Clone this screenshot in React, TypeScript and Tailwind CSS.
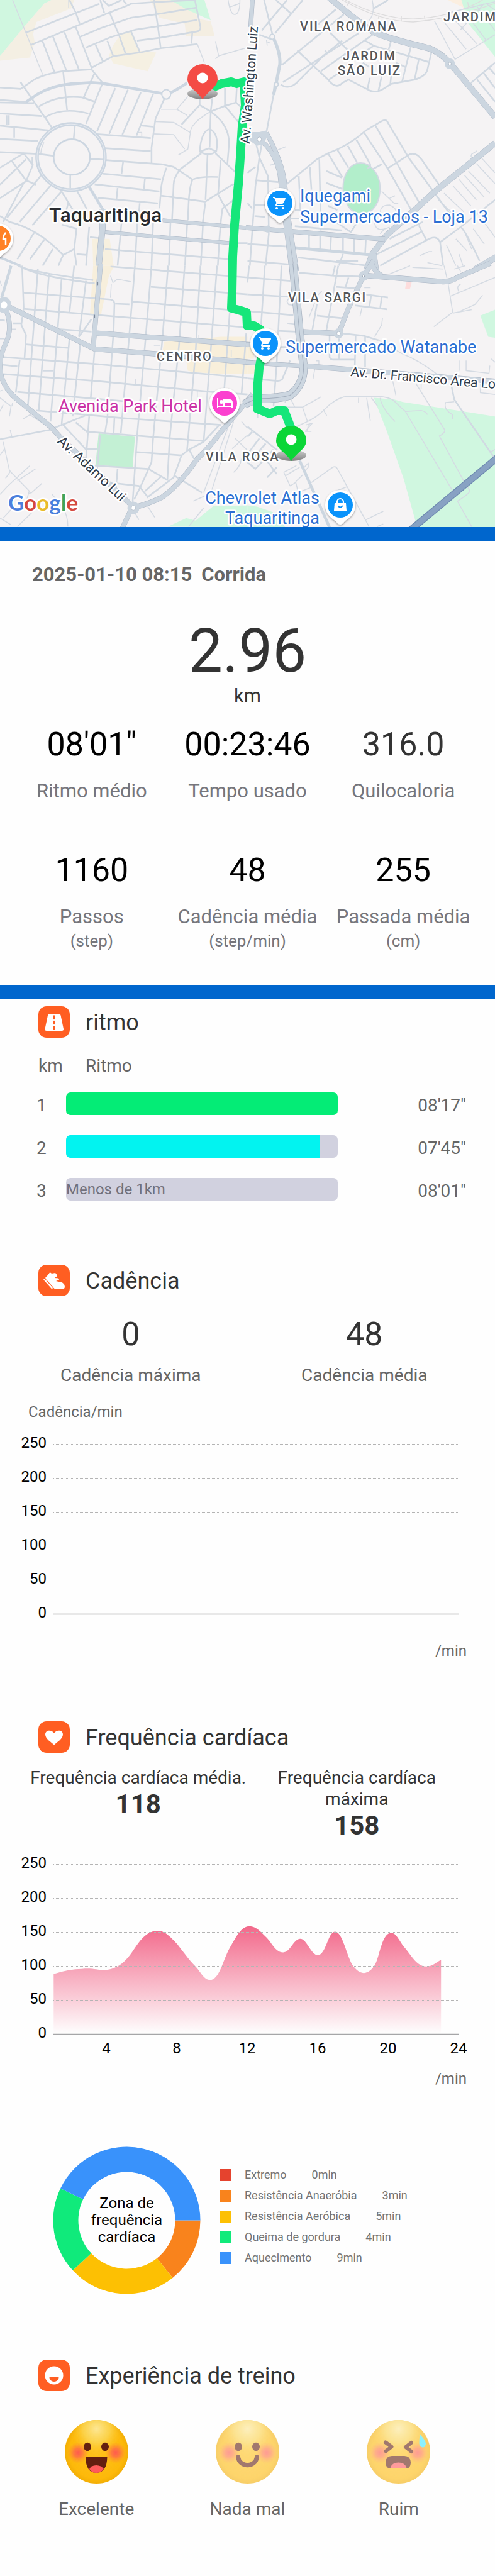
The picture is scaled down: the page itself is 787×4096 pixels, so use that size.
import React from "react";
import { MdShoppingCart } from "react-icons/md";

/* ---------- Map data: street geometry by quadrant ---------- */

const streetsNW = [
  "M165 192L630 22",
  "M195 265L480 155L690 75L800 35L830 22L985 12L1235 0",
  "M440 0L480 75L505 140",
  "M635 0L660 75M650 0L690 35L770 0M780 0L800 25",
  "M695 75L755 210L795 315",
  "M505 218L640 165L830 105L985 85L1245 45",
  "M545 280L700 220L750 205L860 175L1000 155L1250 118",
  "M975 0L1000 155L1018 285",
  "M1235 0L1270 160Q1272 183 1245 186L1018 222L868 240",
  "M1218 195L1213 258",
  "M480 160L580 400L715 332L885 310L1018 285L1250 260",
  "M830 185L885 305M680 240L715 325M605 262L650 360",
  "M268 240L345 425M335 215L420 415M408 190L500 410",
  "M0 517L130 525L220 468Q290 435 400 420L580 410L650 490",
  "M600 430L530 575M400 420L425 650M130 485L330 755",
  "M0 590L165 602M0 605L215 608",
  "M245 630Q360 560 520 575L600 600",
  "M285 692Q400 630 560 670",
  "M650 490L545 730M730 520L615 775M810 530L692 790M892 545L775 795M970 555L865 800",
  "M1040 585L985 700L960 870L960 965",
  "M0 670L265 685M0 742L310 770M0 820L240 832M0 898L235 908",
  "M42 680V738M56 680V738M90 750V812",
  "M475 735L467 820M445 1035V1110M240 908L340 920M570 938L660 942",
  "M615 792L955 815M665 875L955 892",
  "M670 945L1030 970L1100 985L1220 1060",
  "M650 1025L1020 1058M600 1088L1010 1130M620 1168L1000 1200",
  "M780 955L770 1025M918 1055L912 1115M745 1110L738 1175",
  "M885 740L970 748",
  "M1265 585V620L1150 735M1265 620L1335 658L1425 625L1495 605L1560 660",
  "M1425 520V625L1510 720M1500 515L1495 605",
  "M1345 580L1335 658L1328 870",
  "M1335 658Q1460 740 1450 860L1440 975",
  "M1265 895Q1275 770 1330 762Q1390 790 1370 895L1325 875ZQ1320 925 1370 895",
  "M1275 905L1140 1000Q1100 1050 1100 1090L1090 1300",
  "M1365 905L1490 1015M1315 910L1302 1180M1398 945L1382 1140",
  "M1220 1060Q1270 1040 1380 1045M1220 1060Q1200 1100 1195 1200L1190 1300",
  "M1020 1155L1300 1190L1480 1085M1300 1200L1285 1310",
  "M1382 1150L1460 1280M1480 1180L1410 1230Q1395 1300 1380 1568",
  "M1055 990Q1030 1050 1022 1100L1010 1230",
  "M770 1310L745 1568M870 1310L855 1568M970 1310L960 1568M1080 1310L1070 1568M1187 1300L1172 1568M1287 1300L1272 1568",
  "M885 1200L880 1260M665 1470L1450 1530M1510 1435H1568",
  "M325 1090L125 1310M265 1030L45 1285M210 970L165 1070L0 1170M0 990L150 905L205 970V925",
  "M75 950L165 1065L230 1090M150 1080L20 1310M165 940L0 1090",
  "M390 1130L205 1330M390 1130L460 1235M490 1130L550 1235M435 1190L420 1240",
  "M0 1275L60 1310Q240 1350 400 1505L470 1470L485 1350L390 1325",
  "M565 1340L545 1568M470 1470L485 1568M485 1500L550 1505M570 1400L625 1405",
  "M400 1505L370 1568M335 1470L270 1568M280 1415L190 1530M215 1375L110 1530",
];
const thinNW = [
  "M80 0L195 265L270 440M435 48V0M1250 260L1295 370",
  "M1365 243L1385 330L1568 280M1385 330L1365 348",
  "M1445 0Q1460 90 1490 85Q1520 80 1520 0M1455 42L1520 20",
  "M1020 645H1120L1185 680M1120 645L1190 570",
  "M1335 658Q1200 730 1205 790L1190 880L1130 915",
  "M985 718L1100 722L1210 785M970 790L1100 795L1170 880",
  "M875 782H898V805M258 905Q262 870 278 840",
];
const mainNW = [
  "M1030 1300L1568 1345",
  "M665 1370L1460 1435",
];

const streetsNE = [
  "M105 0L160 210M90 180L250 0M175 195L350 0M180 0L275 80M75 205L160 235",
  "M170 500L165 560L120 780",
  "M205 380L225 378L610 85M560 55L400 180",
  "M225 485L705 195M210 500Q260 530 310 490L480 330L600 240M465 420L800 200M515 470L600 420",
  "M315 298L510 470Q560 530 600 490L640 470L775 535Q820 550 860 525L910 495L1060 470Q1130 450 1140 410L1165 310",
  "M520 190L640 300M745 240L800 270L1145 365M800 270L745 305",
  "M910 240L895 290M1035 275L980 480M1085 350L1060 465M775 460L760 525M850 450L830 535M910 450L905 495",
  "M730 370L770 395M940 370L1000 395M490 300L505 312L445 355",
  "M800 50L890 0",
  "M1415 490L1568 370M1455 470L1568 600M1495 430L1568 520M1530 400L1568 440",
  "M245 1090L440 940L510 905Q640 860 750 770L850 715Q880 700 890 725L1020 930L1280 1260",
  "M810 740L1090 1200M740 785L885 990L1050 1260M690 825L775 965Q785 985 760 995M635 860L695 960M570 885L640 990M510 905L600 1045",
  "M455 940L465 1360M395 985L405 1120M325 1040L335 1240H300",
  "M885 995L1030 910Q1070 895 1110 950L1220 1100",
  "M500 1010L600 1050M500 1080L600 1115M790 1000L850 970",
  "M510 1215L570 1240M560 1310L655 1370L690 1320M270 1290H350M300 1335L600 1360",
  "M820 1500L1100 1370M840 1568L1130 1420Q1200 1380 1220 1430L1240 1568",
  "M1220 1430L1350 1340L1568 1180M1350 1340Q1380 1360 1470 1540M1085 1330L1135 1420",
  "M900 1410L1110 1310",
  "M390 1380V1465M460 1385V1470M530 1390L525 1475M605 1400V1480M675 1400V1490M750 1410L745 1500",
  "M320 1520L760 1568M605 1500L580 1568M560 1540H700",
  "M55 850L75 930L130 1040L135 1380L115 1568M90 850L75 930L50 1100L15 1568",
  "M60 1065L195 1075M45 1210L200 1215M45 1275L110 1280M0 1020L50 985M0 1440L240 1455M0 1540L260 1560M0 1200L30 1230",
];
const thinNE = [
  "M790 0Q810 80 770 120",
  "M120 235L125 270M120 245L145 255",
  "M1185 125L1315 350M1245 130L1385 290M1320 125L1455 260M1400 100L1510 235M1455 40L1568 180M1510 20L1568 60",
  "M1315 350L1568 205M1275 75L1568 10M1350 175L1500 20",
  "M190 885L245 865M145 975L165 970",
  "M850 1130L930 1200L955 1200M900 1170L935 1155",
  "M845 1270Q830 1210 900 1210Q950 1230 940 1260M805 1310Q810 1380 900 1340M840 1380L870 1350",
  "M1455 890L1420 910Q1410 930 1430 935",
  "M1300 1095L1415 1215M1340 1060L1450 1180M1375 1035L1500 1165M1400 1010L1535 1140M1450 965L1568 1085M1480 930L1568 1020M1210 1180L1300 1260M1245 1140L1370 1250",
  "M1260 1445L1320 1568M1320 1410L1390 1480M1340 1500L1365 1568M1430 1350L1500 1440M1380 1380L1420 1470M1490 1300L1568 1400",
  "M1140 1550L1230 1568M1090 1510L1150 1485H1170",
];
const railNE = "M600 0Q850 130 1050 130Q1300 110 1568 20M620 0Q850 112 1050 112Q1300 100 1490 0M645 5L630 35M835 80L828 110M975 95V125M1120 92L1125 122M1395 12L1400 40";
const mainNE = [
  "M510 -20Q700 130 800 190Q880 225 1150 285Q1220 310 1280 370L1568 690",
  "M1568 845L1200 1120L880 1390L790 1500L755 1590",
  "M800 1500L815 1600",
  "M1600 1505L1440 1590",
];

const streetsSW = [
  "M115 0Q200 40 590 85M100 -10Q200 60 600 105",
  "M150 160L700 200Q725 205 725 225L720 380",
  "M150 255L1568 365M370 375L580 390M730 225L820 228",
  "M835 212L1568 270M955 125L1568 170M700 5L1568 70",
  "M140 0L150 250L135 350L165 410L155 550",
  "M240 20L175 850M310 50L245 860M390 80L320 920M470 0L440 280M440 430L390 940",
  "M545 90L500 420M510 450L460 890M600 490L575 780",
  "M720 380L680 900L665 990M725 900L720 990",
  "M855 0L820 400L765 990M960 0L925 400L870 990L840 1400",
  "M1065 0L1030 420L970 1020L960 1160Q900 1290 850 1380",
  "M1170 0L1135 460L1075 1020L1060 1270M1270 0L1240 500L1185 1090M1375 0L1340 440L1290 1040",
  "M1455 280L1420 740M1560 400L1530 760",
  "M500 420L580 315M165 465L430 485",
  "M20 540L600 580L1568 662M20 640L600 680L1340 745L1568 760M110 745L780 800M230 855L540 880L780 900L1400 940",
  "M15 585L110 595M270 620H340M125 555L100 750",
  "M0 1025L310 970L540 885M0 320L30 325M0 430H30M80 340H135",
  "M400 940L545 1085L620 1080M480 925L550 980L1290 1035M565 890L545 1140",
  "M865 1100L1150 1120L1190 1090L1290 1040L1390 940M1150 1120L1100 1250L930 1370",
  "M590 1180L940 1200L1060 1265M745 1200L735 1310M690 1280L880 1300L940 1370",
  "M635 1000L615 1210M1200 1090L1230 1140M1020 1245L920 1330",
  "M1105 1240L1280 1340",
];
const thinSW = [
  "M20 1040L60 1210L185 1330L170 1380M0 1120L25 1085M0 780L70 830L60 890M75 830L80 810M0 860L20 820",
  "M35 1255L70 1210M190 1180L50 1300L0 1350M225 1200L110 1270M265 1285L200 1340L180 1345",
  "M0 1490L70 1530M20 1490L70 1440M330 1350L400 1430Q430 1480 430 1540M110 1540L200 1460M65 970L75 1010",
  "M855 1460L880 1500M935 1420L980 1485M0 740L15 735M145 905L190 880L270 930M75 375H100M0 90L10 120",
  "M700 60L715 100L745 80L830 95M705 110L700 190M860 670V700M1260 410V440M1465 500V540M975 470H1015M1250 740V790",
  "M1450 940L1290 1340M1480 920L1340 1330M1225 1390L1320 1350M1195 1540L1290 1430M1480 1220Q1520 1190 1530 1140",
  "M1530 920L1568 960M1490 1020L1568 1090M1470 1080L1568 1000",
];
const mainSW = [
  "M637 -10L590 485",
  "M50 240L600 492L980 520L1600 572",
  "M610 398L1600 468",
  "M40 262Q80 370 40 450Q-20 560 10 660Q40 740 110 790L320 950L390 1020L850 1430",
  "M850 1428Q960 1400 1030 1365Q1130 1300 1250 1140Q1330 1070 1400 980L1600 760",
  "M830 1440L760 1580",
];

const streetsSE = [
  "M110 0L85 370M215 0L185 580L165 830M10 0L0 100",
  "M0 70L270 90M0 170L280 185M20 270L290 292M190 385L310 390",
  "M325 42L560 60L730 65M555 0L540 60M575 0L500 380M640 70L620 130M560 125L700 135",
  "M670 160L890 188M680 235L885 258M785 170L770 250M850 185L840 255",
  "M440 295L600 310M440 225L410 385",
  "M600 400L740 415L830 440M685 410L680 590M745 420V600",
  "M520 410V540Q525 555 545 555H680M580 430V550",
  "M270 560L220 670Q210 680 190 680L0 665M190 480H250",
  "M1290 700L1310 790L1560 1130",
  "M0 950L190 1090M30 980L0 1010M75 1020L10 1100M115 1050L40 1130M165 1085L50 1200L0 1160M90 1110L185 1230M125 1250L185 1190",
];
const thinSE = [
  "M390 305L425 220M725 250L712 300M250 340L300 345M740 130H780M470 150L440 180M270 180L250 210L260 230L300 235",
  "M855 310L850 350L805 420M830 440L980 520Q1090 560 1200 640",
  "M430 590L415 670M433 562H452V585",
  "M1245 0L1270 100L1300 275L1180 360M1300 280L1420 260M1345 270L1440 230L1490 175M1285 180L1568 70",
  "M1350 110Q1320 120 1340 155M1045 10L1240 20M900 50L1030 0M1330 0L1350 35M1310 20L1380 0",
  "M1345 560V620M1385 560V620L1530 635L1535 590M1475 700V750L1568 760M1545 550L1568 570",
  "M1070 700L1250 970Q1250 990 1215 1005L1375 1280L1410 1330Q1400 1350 1330 1390L1420 1540",
  "M1100 700V730",
  "M310 950L380 920Q450 890 520 820Q590 770 640 772H840Q920 780 940 810L1000 860L1300 1330",
  "M1000 860L1100 855Q1130 860 1140 880M840 780Q850 840 935 920M785 780L825 830M755 780L778 915M480 850L502 885M703 780V810M920 680L940 765",
  "M165 835H350L465 775M350 840L380 920M275 790L300 835M238 790V810M65 870V900",
  "M1310 803L1255 808Q1240 850 1300 880V908",
  "M405 1280L540 1190Q560 1180 570 1200L770 1540M750 1500L860 1450M630 1305L560 1330",
  "M230 1220L310 1180M230 1220L270 1300L305 1280M240 1240L330 1190M305 1275L320 1335M305 1275L350 1235M350 1200L385 1165V1190L360 1215",
  "M370 940L410 930L365 980M405 978H370M385 935L380 975M345 1330L400 1310M1540 1100L1568 1085M820 1540L860 1525",
];
const mainSE = [
  "M800 -30L735 60L640 250L578 400",
  "M745 58L1240 95Q1290 95 1340 65L1540 -15",
  "M785 -10Q810 40 850 60",
  "M340 390L575 400",
  "M340 590L1600 685",
];

type StreetProps = { thin: string[]; streets: string[]; mains: string[]; width: number };

function Streets({ thin, streets, mains, width }: StreetProps) {
  return (
    <g fill="none" strokeLinejoin="round">
      <g stroke="#d5dbe3" strokeWidth={6}>
        {thin.map((d) => <path key={d} d={d} />)}
      </g>
      <g stroke="#d1d9e2" strokeWidth={10}>
        {streets.map((d) => <path key={d} d={d} />)}
      </g>
      <g stroke="#a9b4c3" strokeWidth={width + 3}>
        {mains.map((d) => <path key={d} d={d} />)}
      </g>
      <g stroke="#ccd6e0" strokeWidth={width}>
        {mains.map((d) => <path key={d} d={d} />)}
      </g>
    </g>
  );
}

function EndPin({ x, y, color }: { x: number; y: number; color: string }) {
  return (
    <g transform={`translate(${x} ${y})`}>
      <ellipse cx="0" cy="23" rx="24" ry="9" fill="url(#pinShadow)" />
      <path d="M0 32C-4 26-10 20-16 15C-21 10-24 5-24 0A24 24 0 0 1 24 0C24 5 21 10 16 15C10 20 4 26 0 32Z" fill={color} />
      <circle cx="0" cy="-2" r="8.5" fill="#fff" />
    </g>
  );
}

function PlacePin({ x, y, color, children }: { x: number; y: number; color: string; children?: React.ReactNode }) {
  return (
    <g transform={`translate(${x} ${y})`}>
      <path
        d="M0 31C-3 31-5 28-8 25C-17 19-24 12-24 0A24 24 0 0 1 24 0C24 12 17 19 8 25C5 28 3 31 0 31Z"
        fill="#fff"
        filter="url(#soft)"
      />
      <circle r="20" fill={color} />
      {children}
    </g>
  );
}

const halo = "stroke-white stroke-[5px] [paint-order:stroke] [stroke-linejoin:round]";
const district = `text-[20px] font-medium tracking-widest fill-[#54565a] ${halo}`;
const place = `text-[27px] fill-[#2b6fd3] ${halo}`;
const road = `fill-[#303c4b] ${halo}`;

function RouteMap() {
  return (
    <svg viewBox="0 0 787 838" className="block w-full" role="img" aria-label="Mapa do percurso">
      <defs>
        <linearGradient id="pinShadow" x1="0" y1="0" x2="0" y2="1">
          <stop offset="0" stopColor="#d2d2d2" />
          <stop offset="1" stopColor="#808080" />
        </linearGradient>
        <filter id="soft" x="-30%" y="-30%" width="160%" height="160%">
          <feDropShadow dx="0" dy="1.5" stdDeviation="1.8" floodColor="#000" floodOpacity="0.4" />
        </filter>
      </defs>
      <rect width="787" height="838" fill="#f5f3f4" />

      <g transform="scale(.25097 .26939)">
        <path d="M0 330L160 150L280 20L325 0H470L450 50L230 130L210 200L220 250L190 340L0 358Z" fill="#f4efe3" />
        <path d="M0 0H325L280 20L160 150L0 330Z" fill="#d0f7e0" />
        <path d="M950 0H1090L1180 50L1240 60L1250 110L1335 125L1360 215H1180L1170 140L1010 105Z" fill="#f4eee2" />
        <path d="M1080 0H1295L1335 120L1180 55Z" fill="#d0f7e0" />
        <path d="M770 195L830 185L880 300L990 310L935 420L720 375L690 330L715 270Z" fill="#f5f0e2" />
        <path d="M585 1410H695L720 1568H590Z" fill="#f7f0df" />
        <Streets thin={thinNW} streets={streetsNW} mains={mainNW} width={19} />
        <path d="M165 602L240 555Q330 505 450 495L580 487L650 492L1030 552M1080 548Q1120 530 1185 490M560 1095L660 1250" fill="none" stroke="#ccd6e1" strokeWidth="17" />
        <path d="M650 1235V1340L622 1600" fill="none" stroke="#a9b4c3" strokeWidth="39" />
        <path d="M650 1235V1340L622 1600" fill="none" stroke="#ccd6e0" strokeWidth="35" />
        <ellipse cx="450" cy="927" rx="215" ry="195" fill="none" stroke="#ccd6e1" strokeWidth="22" />
        <ellipse cx="450" cy="927" rx="215" ry="195" fill="none" stroke="#e6eaf0" strokeWidth="4" />
        <ellipse cx="455" cy="927" rx="115" ry="105" fill="none" stroke="#ccd6e1" strokeWidth="10" />
        <circle cx="1053" cy="557" r="28" fill="#f5f3f4" stroke="#ccd6e1" strokeWidth="8" />
        <path d="M0 1520L130 1568" stroke="#ccd6e1" strokeWidth="14" />
      </g>

      <g transform="translate(393.5 0) scale(.25097 .26939)">
        <path d="M1270 0H1370L1380 50Z" fill="#fbeee0" />
        <path d="M1355 0H1568V335L1400 140Z" fill="#d0f7e0" />
        <path d="M715 962C790 962 840 1040 840 1110C840 1190 800 1262 725 1262C650 1262 605 1190 605 1110C605 1030 650 962 715 962Z" fill="#b2eecb" stroke="#d1d9e2" strokeWidth="8" />
        <path d={railNE} fill="none" stroke="#dddcdd" strokeWidth="5" />
        <Streets thin={thinNE} streets={streetsNE} mains={mainNE} width={34} />
        <path d="M160 215Q210 310 205 380L180 500L165 560" fill="none" stroke="#ccd6e0" strokeWidth="20" />
        <path d="M300 1462L790 1505" stroke="#ccd6e0" strokeWidth="18" />
        <g fill="none" strokeLinejoin="round">
          <path d="M32 -10L20 160M-10 1343L870 1412M95 838Q175 900 205 1030L225 1200L280 1600M120 785Q225 960 238 1100L262 1300L312 1600" stroke="#a9b4c3" strokeWidth="29" />
          <path d="M32 -10L20 160M-10 1343L870 1412M95 838Q175 900 205 1030L225 1200L280 1600M120 785Q225 960 238 1100L262 1300L312 1600" stroke="#ccd6e0" strokeWidth="25" />
        </g>
        <path d="M0 780L75 780L115 770L135 790L100 850L60 860L0 820Z" fill="#ccd6e0" />
        <circle cx="75" cy="822" r="13" fill="#fff" stroke="#a9b4c3" strokeWidth="3" />
        <circle cx="1282" cy="376" r="32" fill="#ccd6e0" />
        <circle cx="1282" cy="376" r="9" fill="#fff" stroke="#a9b4c3" strokeWidth="3" />
        <circle cx="157" cy="217" r="15" fill="#f5f3f4" stroke="#ccd6e0" strokeWidth="8" />
        <circle cx="183" cy="498" r="12" fill="#f5f3f4" stroke="#ccd6e0" strokeWidth="8" />
        <circle cx="128" cy="1352" r="21" fill="#ccd6e0" />
      </g>

      <g transform="translate(0 422.4) scale(.25097 .26939)">
        <path d="M1040 450L1400 420H1568V640H1430L1230 630L1190 620L1180 560L1030 500Z" fill="#f8efdb" />
        <path d="M590 0H725L690 60L640 290H570Z" fill="#f7efdc" />
        <path d="M1065 1540L1180 1490L1240 1505L1350 1420L1568 1415V1545Z" fill="#d0f7e0" />
        <path d="M625 990L855 1010L840 1195L605 1175Z" fill="#c3f0d4" />
        <path d="M70 0L10 190" stroke="#ccd6e0" strokeWidth="18" />
        <Streets thin={thinSW} streets={streetsSW} mains={mainSW} width={28} />
        <circle cx="25" cy="232" r="34" fill="#fff" stroke="#ccd6e0" strokeWidth="26" />
        <circle cx="845" cy="1430" r="38" fill="#ccd6e0" />
        <circle cx="845" cy="1430" r="14" fill="#fff" stroke="#a9b4c3" strokeWidth="3" />
        <path d="M620 95V115M600 290V310" stroke="#5d6b80" strokeWidth="3" />
      </g>

      <g transform="translate(393.5 422.4) scale(.25097 .26939)">
        <path d="M800 780L930 790L985 805L1568 890V1545H1075L990 1260L880 970Z" fill="#d0f7e0" />
        <path d="M1475 295L1568 260V425L1525 420Z" fill="#d0f7e0" />
        <path d="M0 1415L60 1422L160 1455L240 1545H0Z" fill="#d0f7e0" />
        <path d="M1005 100L1040 98L1030 135L998 140Z" fill="#fddcdc" />
        <path d="M0 480H40V550H0ZM0 590H50V635L0 640Z" fill="#f8efdb" />
        <Streets thin={thinSE} streets={streetsSE} mains={mainSE} width={28} />
        <path d="M330 1150L520 1545" stroke="#ccd6e0" strokeWidth="18" />
        <g fill="none">
          <path d="M-10 571L350 592M-10 465L60 470" stroke="#a9b4c3" strokeWidth="27" />
          <path d="M288 -10L330 400L355 590Q360 700 270 765Q200 785 80 785Q20 795 -20 820" stroke="#a3aebd" strokeWidth="53" />
          <path d="M288 -10L330 400L355 590Q360 700 270 765Q200 785 80 785Q20 795 -20 820" stroke="#ccd6e0" strokeWidth="48" />
          <path d="M-10 571L350 592M-10 465L60 470M340 590H380" stroke="#ccd6e0" strokeWidth="23" />
          <path d="M288 -10L330 400L355 590Q360 700 270 765Q200 785 80 785Q20 795 -20 820" stroke="#a3aebd" strokeWidth="4" />
          <path d="M1600 1120L1020 1570" stroke="#6f8ab0" strokeWidth="42" />
          <path d="M1600 1120L1020 1570" stroke="#88a2c3" strokeWidth="32" />
        </g>
        <circle cx="735" cy="61" r="30" fill="#ccd6e0" />
        <circle cx="735" cy="61" r="7" fill="#fff" stroke="#8a97a8" strokeWidth="3" />
        <circle cx="577" cy="400" r="30" fill="#ccd6e0" />
        <circle cx="577" cy="400" r="11" fill="#fff" stroke="#a9b4c3" strokeWidth="3" />
      </g>

      <path
        d="M330 143L352 133L368 130L376 133L388 130L390 168L385 201L382 251L379 293L373 357L370 408L369 464L368 490L380 493L392 497L393 518L404 518L414 524L420 545L412 586L409 620L409 650L429 658L440 653L452 653L464 684"
        fill="none"
        stroke="#16e67a"
        strokeWidth="14"
        strokeLinejoin="round"
      />

      <PlacePin x={-3} y={379} color="#ff8125">
        <path d="M12 -9Q8 -5 8 1H12V10" fill="none" stroke="#fff" strokeWidth="2.5" />
      </PlacePin>
      <PlacePin x={445} y={323} color="#0a93fb">
        <MdShoppingCart x={-12} y={-12} size={24} color="#fff" />
      </PlacePin>
      <PlacePin x={541} y={803} color="#0a93fb">
        <path d="M-9 -3H9L10 9H-10Z" fill="#fff" />
        <path d="M-5 -2V-5A5 5 0 0 1 5 -5V-2" fill="none" stroke="#fff" strokeWidth="2.2" />
        <path d="M-4 1Q0 6 4 1" fill="none" stroke="#0a93fb" strokeWidth="2" />
      </PlacePin>
      <PlacePin x={357} y={641} color="#fb40cf">
        <path d="M-11 -8V8M-11 5H12V8M12 5V-1Q12 -5 8 -5H-1V4" fill="none" stroke="#fff" strokeWidth="2" />
        <path d="M0 -5H8Q12 -4 12 0H0Z" fill="#fff" />
        <circle cx="-5" cy="-2" r="3" fill="#fff" />
      </PlacePin>

      <text x="78" y="353" className={`fill-[#2a2c30] text-[32px] font-medium ${halo}`}>Taquaritinga</text>
      <text x="477" y="49" className={district}>VILA ROMANA</text>
      <text x="545" y="96" className={district}>JARDIM</text>
      <text x="537" y="119" className={district}>SÃO LUIZ</text>
      <text x="705" y="34" className={district}>JARDIM</text>
      <text x="458" y="480" className={district}>VILA SARGI</text>
      <text x="249" y="574" className={district}>CENTRO</text>
      <text x="327" y="733" className={district}>VILA ROSA</text>
      <text x="477" y="321" className={place}>Iquegami</text>
      <text x="477" y="354" className={place}>Supermercados - Loja 13</text>
      <text x="508" y="801" textAnchor="end" className={place}>Chevrolet Atlas</text>
      <text x="508" y="833" textAnchor="end" className={place}>Taquaritinga</text>
      <text x="93" y="655" className={`fill-[#cb33a6] text-[27px] ${halo}`}>Avenida Park Hotel</text>
      <text transform="translate(397 229) rotate(-86)" className={`text-[21px] ${road}`}>Av. Washington Luiz</text>
      <text transform="translate(90 703) rotate(43)" className={`text-[22px] ${road}`}>Av. Adamo Lui</text>
      <text transform="translate(557 598) rotate(5)" className={`text-[21px] ${road}`}>Av. Dr. Francisco Área Lo</text>
      <PlacePin x={422} y={546} color="#0a93fb">
        <MdShoppingCart x={-12} y={-12} size={24} color="#fff" />
      </PlacePin>
      <text x="454" y="561" className={place}>Supermercado Watanabe</text>

      <EndPin x={322} y={126} color="#f44b45" />
      <EndPin x={463} y={701} color="#0bd637" />

      <text x="13" y="812" className={`font-[Lato] text-[35px] font-bold ${halo}`}>
        <tspan fill="#4a80dd">G</tspan>
        <tspan fill="#d54a3f">o</tspan>
        <tspan fill="#e8bb2d">o</tspan>
        <tspan fill="#4a80dd">g</tspan>
        <tspan fill="#3fa659">l</tspan>
        <tspan fill="#d54a3f">e</tspan>
      </text>
    </svg>
  );
}

/* ---------- Shared pieces ---------- */

function Divider() {
  return <div className="h-[22px] bg-[#0066cd]" />;
}

function SectionTitle({ title, children }: { title: string; children: React.ReactNode }) {
  return (
    <div className="flex items-start gap-[25px] pl-[61px]">
      <svg viewBox="0 0 50 50" className="size-[50px] shrink-0" aria-hidden="true">
        <rect width="50" height="50" rx="13" fill="#ff5e22" />
        {children}
      </svg>
      <h2 className="text-[36px] leading-[53px] text-[#333]">{title}</h2>
    </div>
  );
}

function Stat({ value, label, unit, dim }: { value: string; label: string; unit?: string; dim?: boolean }) {
  return (
    <div className="flex flex-col items-center whitespace-nowrap">
      <span className={dim ? "text-[52px] leading-[60px] text-[#333]" : "text-[52px] leading-[60px] text-black"}>{value}</span>
      <span className="mt-[26px] text-[31px] leading-[36px] text-[#76767c]">{label}</span>
      {unit && <span className="mt-1 text-[26px] leading-[32px] text-[#76767c]">{unit}</span>}
    </div>
  );
}

const gridValues = [250, 200, 150, 100, 50, 0];

function GridLines({ top }: { top: number }) {
  return (
    <g>
      {gridValues.map((v, i) => (
        <g key={v}>
          <text x="74" y={top + 6 + i * 54} textAnchor="end" className="fill-black text-[24px]">{v}</text>
          <line
            x1="85"
            x2="729"
            y1={top + 0.5 + i * 54}
            y2={top + 0.5 + i * 54}
            stroke={v === 0 ? "#a6a6a8" : "#b4b4b4"}
            strokeWidth={v === 0 ? 1.5 : 1}
            strokeDasharray={v === 0 ? undefined : "1 1"}
          />
        </g>
      ))}
    </g>
  );
}

const paces = [
  { km: 1, time: "08'17\"", share: 100, fill: "bg-[#04ec76]", note: "" },
  { km: 2, time: "07'45\"", share: 93.5, fill: "bg-[#02f3f0]", note: "" },
  { km: 3, time: "08'01\"", share: 0, fill: "", note: "Menos de 1km" },
];

const zones = [
  { name: "Extremo", minutes: 0, color: "#e5432e", swatch: "bg-[#e5432e]" },
  { name: "Resistência Anaeróbia", minutes: 3, color: "#f9831c", swatch: "bg-[#f9831c]" },
  { name: "Resistência Aeróbica", minutes: 5, color: "#fdc003", swatch: "bg-[#fdc003]" },
  { name: "Queima de gordura", minutes: 4, color: "#10ea7b", swatch: "bg-[#10ea7b]" },
  { name: "Aquecimento", minutes: 9, color: "#3992fb", swatch: "bg-[#3992fb]" },
];

function ZoneRing() {
  const total = zones.reduce((sum, z) => sum + z.minutes, 0);
  let start = 0;
  const outer = 117;
  const inner = 77;
  const point = (r: number, a: number) => `${117.5 + r * Math.cos(a)} ${117.5 + r * Math.sin(a)}`;
  return (
    <svg viewBox="0 0 235 235" className="size-full" aria-hidden="true">
      {zones.map((z) => {
        if (!z.minutes) return null;
        const end = start + (z.minutes / total) * Math.PI * 2;
        const d = `M${point(outer, start)}A${outer} ${outer} 0 0 1 ${point(outer, end)}L${point(inner, end)}A${inner} ${inner} 0 0 0 ${point(inner, start)}Z`;
        start = end;
        return <path key={z.name} d={d} fill={z.color} />;
      })}
    </svg>
  );
}

/* ---------- Faces ---------- */

function Face({ faded, children }: { faded?: boolean; children: React.ReactNode }) {
  return (
    <svg viewBox="0 0 101 101" className={faded ? "size-[101px] opacity-60" : "size-[101px]"} aria-hidden="true">
      <circle cx="50.5" cy="50.5" r="50.5" fill="url(#faceBase)" />
      <circle cx="50.5" cy="50.5" r="50.5" fill="url(#faceShine)" />
      <circle cx="21" cy="52" r="17" fill="url(#cheek)" />
      <circle cx="81" cy="52" r="17" fill="url(#cheek)" />
      {children}
    </svg>
  );
}

function FaceGradients() {
  return (
    <svg className="absolute size-0" aria-hidden="true">
      <defs>
        <radialGradient id="faceBase" cx=".5" cy=".5" r=".5">
          <stop offset="0" stopColor="#ffc21c" />
          <stop offset=".85" stopColor="#fdb90a" />
          <stop offset="1" stopColor="#f3ae05" />
        </radialGradient>
        <radialGradient id="faceShine" cx=".5" cy=".14" r=".42">
          <stop offset="0" stopColor="#fde795" />
          <stop offset=".5" stopColor="#fbd95c" stopOpacity=".75" />
          <stop offset="1" stopColor="#fdc21c" stopOpacity="0" />
        </radialGradient>
        <radialGradient id="cheek">
          <stop offset="0" stopColor="#ff5a4e" />
          <stop offset=".4" stopColor="#ff6a48" stopOpacity=".8" />
          <stop offset="1" stopColor="#ff8a30" stopOpacity="0" />
        </radialGradient>
      </defs>
    </svg>
  );
}

const brown = "#642010";

export default function App() {
  return (
    <main className="w-full bg-[#fefefe] font-[Roboto,sans-serif]">
      <FaceGradients />
      <RouteMap />
      <Divider />

      <section className="px-[22px] pt-[34px] pb-[54px]">
        <h1 className="flex gap-[15px] pl-[29px] text-[31px] leading-[40px] font-bold text-[#666]">
          <span>2025-01-10 08:15</span>
          <span>Corrida</span>
        </h1>
        <div className="mt-[53px] text-center text-[96px] leading-[96px] text-[#333]">2.96</div>
        <div className="mt-1 text-center text-[31px] leading-[40px] text-[#333]">km</div>
        <div className="mt-[27px] grid grid-cols-3">
          <Stat value={"08'01\""} label="Ritmo médio" />
          <Stat value="00:23:46" label="Tempo usado" />
          <Stat value="316.0" label="Quilocaloria" dim />
        </div>
        <div className="mt-[78px] grid grid-cols-3">
          <Stat value="1160" label="Passos" unit="(step)" />
          <Stat value="48" label="Cadência média" unit="(step/min)" />
          <Stat value="255" label="Passada média" unit="(cm)" />
        </div>
      </section>

      <Divider />

      <section className="pt-3">
        <SectionTitle title="ritmo">
          <path d="M18 12H32Q35 12 35.5 14.5L40 36Q40.300 39 37.500 39H13Q10 39 10.500 36L15 14.500Q15.500 12 18 12Z" fill="#fff" />
          <path d="M25 16V19.500M25 24.500V27.500M25 33V35.500" stroke="#ff5e22" strokeWidth="3.500" strokeLinecap="round" />
        </SectionTitle>
        <table className="mt-[26px] w-full table-fixed text-left text-[28px] text-[#666]">
          <colgroup>
            <col className="w-[105px]" />
            <col />
            <col className="w-[250px]" />
          </colgroup>
          <thead>
            <tr>
              <th className="pb-[26px] pl-[61px] leading-[32px] font-normal">km</th>
              <th className="pb-[26px] pl-[31px] leading-[32px] font-normal">Ritmo</th>
              <th />
            </tr>
          </thead>
          <tbody>
            {paces.map((p) => (
              <tr key={p.km} className="align-top">
                <td className="pb-[26px] pl-[58px] leading-[42px]">{p.km}</td>
                <td className="pb-[26px]">
                  <div className="flex h-[36px] overflow-hidden rounded-[7px] bg-[#d1d1df] text-[24px] leading-[36px] text-[#70707c]">
                    <div className={p.fill} style={{ width: `${p.share}%` }} />
                    {p.note}
                  </div>
                </td>
                <td className="pr-[46px] pb-[26px] text-right leading-[42px]">{p.time}</td>
              </tr>
            ))}
          </tbody>
        </table>
      </section>

      <section className="pt-[70px]">
        <SectionTitle title="Cadência">
          <path d="M11.500 20Q15 17 18 12.500Q20 12 21 14L27 13Q30 16 30 18L26 21L32 21.500L33 24L28 26L35 27.500Q42 29 42 35Q42 38.500 38 38.500H28Q25 38.500 23 35L12 23Q11 21 11.500 20Z" fill="#fff" />
          <path d="M9.500 23.500L21.500 37" stroke="#fff" strokeWidth="2.500" strokeLinecap="round" />
        </SectionTitle>
        <div className="mt-7 grid grid-cols-2 px-[22px] text-center">
          <div>
            <div className="text-[52px] leading-[60px] text-[#333]">0</div>
            <div className="mt-[19px] text-[28px] leading-[32px] text-[#666]">Cadência máxima</div>
          </div>
          <div>
            <div className="text-[52px] leading-[60px] text-[#333]">48</div>
            <div className="mt-[19px] text-[28px] leading-[32px] text-[#666]">Cadência média</div>
          </div>
        </div>
        <div className="mt-7 pl-[45px] text-[24px] leading-[28px] text-[#666]">Cadência/min</div>
        <svg viewBox="0 0 787 320" className="mt-[11px] block w-full" role="img" aria-label="Gráfico de cadência">
          <GridLines top={26} />
        </svg>
        <div className="mt-[21px] pr-[45px] text-right text-[24px] leading-[28px] text-[#666]">/min</div>
      </section>

      <section className="pt-[98px]">
        <SectionTitle title="Frequência cardíaca">
          <path d="M25 37.500C21 33.500 11 28 11 21C11 14 20.500 12.500 25 19C29.500 12.500 39 14 39 21C39 28 29 33.500 25 37.500Z" fill="#fff" />
        </SectionTitle>
        <div className="mt-5 grid grid-cols-2 px-[46px] text-center text-[#333]">
          <div>
            <div className="text-[28px] leading-[34px]">Frequência cardíaca média.</div>
            <div className="text-[42px] leading-[50px] font-bold">118</div>
          </div>
          <div>
            <div className="text-[28px] leading-[34px]">Frequência cardíaca<br />máxima</div>
            <div className="text-[42px] leading-[50px] font-bold">158</div>
          </div>
        </div>
        <svg viewBox="0 0 787 336" className="mt-3 block w-full" role="img" aria-label="Gráfico de frequência cardíaca">
          <defs>
            <linearGradient id="pulse" gradientUnits="userSpaceOnUse" x1="0" y1="122" x2="0" y2="294">
              <stop offset="0" stopColor="#f2688a" />
              <stop offset="1" stopColor="#f2688a" stopOpacity="0" />
            </linearGradient>
          </defs>
          <path
            d="M85.300 294V198.700Q110 190.700 130 190.700C150 188.700 156 193.500 170.700 192C186 190 196 181 203.300 172.800C216 159 226 130 251.500 130C261 130 271 139 282 151.600C291 163 301 177 309.700 185.600C319 195 324 208.300 333.800 208.300C349 208.300 354 177 365.400 157C374 143 382.500 122.800 396.500 122.800C407.500 122.800 416.500 134 423 140C432.600 149 437.600 164.400 450.200 164.400C461.800 164.400 466.800 142.800 477.300 142.800C487.900 142.800 494.400 168.800 505.400 168.800C518.500 168.800 521 131.600 533 131.600C544.600 131.600 552 173 561.100 185.600C565.700 191.500 571.200 197.200 578.200 197.200C584.300 197.200 590.300 193 595.300 185.600C603.800 173 606.300 133.200 622.400 133.200C630 133.200 636.500 149 643.500 157C654 169 662.500 186.800 677.600 186.800C687.600 186.800 692.600 181 701.200 176V294Z"
            fill="url(#pulse)"
          />
          <GridLines top={24} />
          {[4, 8, 12, 16, 20, 24].map((m, i) => (
            <text key={m} x={169 + i * 112} y="325" textAnchor="middle" className="fill-black text-[24px]">{m}</text>
          ))}
        </svg>
        <div className="mt-[15px] pr-[45px] text-right text-[24px] leading-[28px] text-[#666]">/min</div>
      </section>

      <section className="flex items-start gap-[30px] pt-[94px] pl-[84px]">
        <div className="relative size-[235px] shrink-0">
          <ZoneRing />
          <p className="absolute inset-0 flex items-center justify-center text-center text-[24px] leading-[27px] text-black">
            Zona de<br />frequência<br />cardíaca
          </p>
        </div>
        <ul className="flex flex-col gap-[13px] pt-[35px] text-[18px] leading-[20px] text-[#737373]">
          {zones.map((z) => (
            <li key={z.name} className="flex items-center">
              <span className={`mr-[21px] size-[19px] ${z.swatch}`} />
              <span className="mr-10">{z.name}</span>
              <span>{z.minutes}min</span>
            </li>
          ))}
        </ul>
      </section>

      <section className="pt-[104px] pb-[90px]">
        <SectionTitle title="Experiência de treino">
          <circle cx="25" cy="25" r="14.500" fill="#fff" />
          <path d="M17.500 28H32.500C32.500 32 29 35 25 35C21 35 17.500 32 17.500 28Z" fill="#ff5e22" />
        </SectionTitle>
        <div className="mt-[43px] grid grid-cols-3 px-[33px] text-[28px] leading-[32px] text-[#666]">
          <button type="button" className="flex flex-col items-center gap-[25px]">
            <Face>
              <ellipse cx="36" cy="42.500" rx="6" ry="6.800" fill={brown} />
              <ellipse cx="64" cy="42.500" rx="6" ry="6.800" fill={brown} />
              <path d="M33 58.500H67.500Q67 84 50 84Q33.500 84 33 58.500Z" fill={brown} />
              <path d="M39 78Q42 72 50 72Q58 72 62 78Q57 84 50 84Q43 84 39 78Z" fill="#ff5b5b" />
            </Face>
            Excelente
          </button>
          <button type="button" className="flex flex-col items-center gap-[25px]">
            <Face faded>
              <ellipse cx="36" cy="42.500" rx="6" ry="6.800" fill={brown} />
              <ellipse cx="64" cy="42.500" rx="6" ry="6.800" fill={brown} />
              <path d="M35.500 59C38 76 63 76 65.500 59" fill="none" stroke={brown} strokeWidth="7" strokeLinecap="round" />
            </Face>
            Nada mal
          </button>
          <button type="button" className="flex flex-col items-center gap-[25px]">
            <Face faded>
              <path d="M30 35.500L39.500 42.500L30.500 49.500M71 36L62 43L71 50" fill="none" stroke={brown} strokeWidth="6" strokeLinecap="round" strokeLinejoin="round" />
              <path d="M30 67Q31 57 40 57H60Q69 57 70 67Q70 74 66 76.500H34.500Q30 74 30 67Z" fill={brown} />
              <path d="M37.500 76.500Q40 67.500 50.500 67.500Q61 67.500 63.500 76.500Z" fill="#ff5b5b" />
              <path d="M84.500 23C90 28 94 34 94 38Q93 43.500 89 43.500Q84 43 83.500 37Q83.500 30 84.500 23Z" fill="#40e8ff" />
            </Face>
            Ruim
          </button>
        </div>
      </section>
    </main>
  );
}
